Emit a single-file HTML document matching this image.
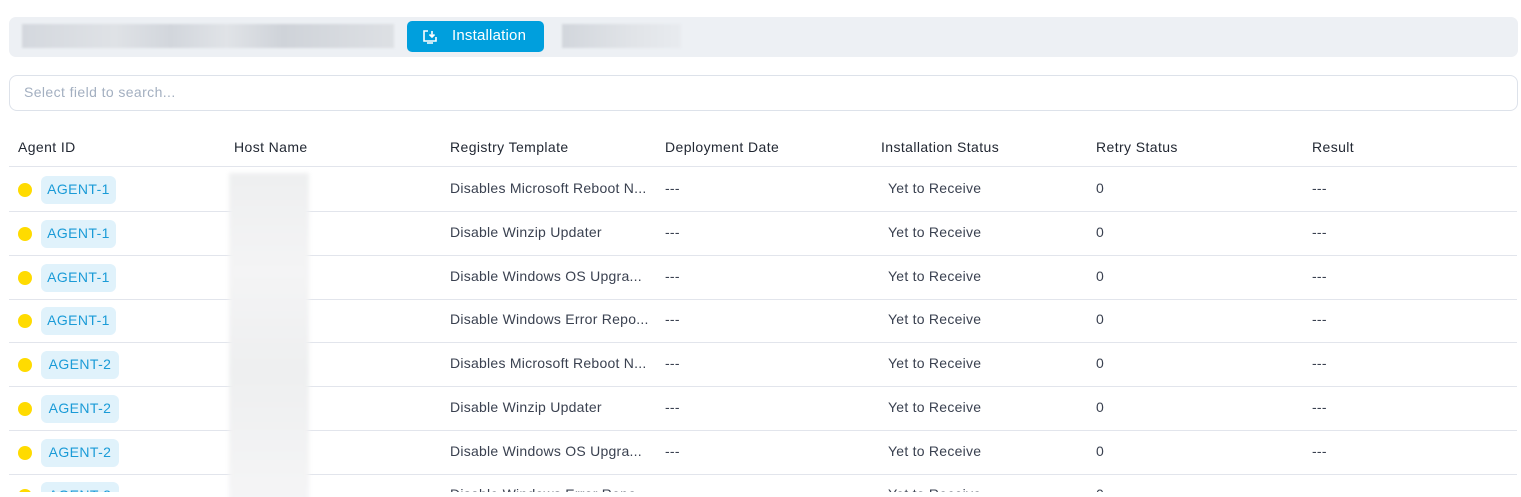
<!DOCTYPE html>
<html><head><style>
*{box-sizing:border-box;margin:0;padding:0}
html,body{width:1521px;height:497px;overflow:hidden}
body{background:#fff;font-family:"Liberation Sans",sans-serif;color:#3a4150;position:relative}
.bar{position:absolute;left:9px;top:17px;width:1509px;height:40px;background:#edf0f4;border-radius:7px}
.blur1{position:absolute;left:22px;top:24px;width:372px;height:24px;background:linear-gradient(90deg,#d4d8de,#dfe2e6 25%,#d2d6dc 40%,#e0e3e7 55%,#cfd3d9 70%,#dde0e4 100%);filter:blur(1px)}
.blur2{position:absolute;left:562px;top:24px;width:119px;height:24px;background:linear-gradient(90deg,#d2d6dc,#e1e4e8 60%,#e8ebef);filter:blur(1px)}
.btn{position:absolute;left:407px;top:21px;width:137px;height:31px;background:#009fdd;border-radius:5px;color:#fff;font-size:15px;line-height:30px;letter-spacing:0.2px}
.btn span{position:absolute;left:45px;top:0}
.btn svg{position:absolute;left:15px;top:8px}
.search{position:absolute;left:9px;top:75px;width:1509px;height:36px;border:1px solid #dde2ea;border-radius:8px;font-size:14px;letter-spacing:0.4px;color:#a3afc0;line-height:33px;padding-left:14px}
.hdr,.row{position:absolute;left:9px;width:1508px}
.hdr{top:135px;height:32px;font-size:14px;letter-spacing:0.4px;color:#222833;border-bottom:1px solid #e2e5ec}
.cell{position:absolute;white-space:nowrap}
.row{height:44px;border-bottom:1px solid #e2e5ec;font-size:14px;letter-spacing:0.25px}
.dot{position:absolute;left:9px;width:14px;height:14px;border-radius:50%;background:#ffdb00;top:15px}
.tag{position:absolute;left:32px;top:8px;height:28px;line-height:27px;width:75px;text-align:center;background:#e0f2fb;color:#1a9bd7;border-radius:6px;font-size:14px;letter-spacing:0.4px}
.tag.w{width:78px}
.hb{position:absolute;left:229px;top:173px;width:80px;height:330px;background:linear-gradient(180deg,#eeeff0,#f4f4f5 30%,#eeeff0 60%,#f5f5f6);filter:blur(2px)}
</style></head><body>
<div class="bar"></div><div class="blur1"></div><div class="blur2"></div>
<div class="btn"><svg width="16" height="16" viewBox="0 0 16 16" fill="none" stroke="#fff" stroke-width="1.6"><path d="M6 2H2v10h12V8M5 14h6M10 2v6M7.5 5.5L10 8l2.5-2.5"/></svg><span>Installation</span></div>
<div class="search">Select field to search...</div>
<div class="hdr">
<div class="cell" style="left:9px;top:4px">Agent ID</div>
<div class="cell" style="left:225px;top:4px">Host Name</div>
<div class="cell" style="left:441px;top:4px">Registry Template</div>
<div class="cell" style="left:656px;top:4px">Deployment Date</div>
<div class="cell" style="left:872px;top:4px">Installation Status</div>
<div class="cell" style="left:1087px;top:4px">Retry Status</div>
<div class="cell" style="left:1303px;top:4px">Result</div>
</div>
<div style="position:absolute;left:0;top:0;width:1521px;height:492px;overflow:hidden">
<div class="row" style="top:168px"><div class="dot"></div><div class="tag">AGENT-1</div><div class="cell" style="left:441px;top:12px">Disables Microsoft Reboot N...</div><div class="cell" style="left:656px;top:12px">---</div><div class="cell" style="left:879px;top:12px">Yet to Receive</div><div class="cell" style="left:1087px;top:12px">0</div><div class="cell" style="left:1303px;top:12px">---</div></div>
<div class="row" style="top:212px"><div class="dot"></div><div class="tag">AGENT-1</div><div class="cell" style="left:441px;top:12px">Disable Winzip Updater</div><div class="cell" style="left:656px;top:12px">---</div><div class="cell" style="left:879px;top:12px">Yet to Receive</div><div class="cell" style="left:1087px;top:12px">0</div><div class="cell" style="left:1303px;top:12px">---</div></div>
<div class="row" style="top:256px"><div class="dot"></div><div class="tag">AGENT-1</div><div class="cell" style="left:441px;top:12px">Disable Windows OS Upgra...</div><div class="cell" style="left:656px;top:12px">---</div><div class="cell" style="left:879px;top:12px">Yet to Receive</div><div class="cell" style="left:1087px;top:12px">0</div><div class="cell" style="left:1303px;top:12px">---</div></div>
<div class="row" style="top:299px"><div class="dot"></div><div class="tag">AGENT-1</div><div class="cell" style="left:441px;top:12px">Disable Windows Error Repo...</div><div class="cell" style="left:656px;top:12px">---</div><div class="cell" style="left:879px;top:12px">Yet to Receive</div><div class="cell" style="left:1087px;top:12px">0</div><div class="cell" style="left:1303px;top:12px">---</div></div>
<div class="row" style="top:343px"><div class="dot"></div><div class="tag w">AGENT-2</div><div class="cell" style="left:441px;top:12px">Disables Microsoft Reboot N...</div><div class="cell" style="left:656px;top:12px">---</div><div class="cell" style="left:879px;top:12px">Yet to Receive</div><div class="cell" style="left:1087px;top:12px">0</div><div class="cell" style="left:1303px;top:12px">---</div></div>
<div class="row" style="top:387px"><div class="dot"></div><div class="tag w">AGENT-2</div><div class="cell" style="left:441px;top:12px">Disable Winzip Updater</div><div class="cell" style="left:656px;top:12px">---</div><div class="cell" style="left:879px;top:12px">Yet to Receive</div><div class="cell" style="left:1087px;top:12px">0</div><div class="cell" style="left:1303px;top:12px">---</div></div>
<div class="row" style="top:431px"><div class="dot"></div><div class="tag w">AGENT-2</div><div class="cell" style="left:441px;top:12px">Disable Windows OS Upgra...</div><div class="cell" style="left:656px;top:12px">---</div><div class="cell" style="left:879px;top:12px">Yet to Receive</div><div class="cell" style="left:1087px;top:12px">0</div><div class="cell" style="left:1303px;top:12px">---</div></div>
<div class="row" style="top:474px"><div class="dot"></div><div class="tag w">AGENT-2</div><div class="cell" style="left:441px;top:12px">Disable Windows Error Repo...</div><div class="cell" style="left:656px;top:12px">---</div><div class="cell" style="left:879px;top:12px">Yet to Receive</div><div class="cell" style="left:1087px;top:12px">0</div><div class="cell" style="left:1303px;top:12px">---</div></div>
</div>
<div class="hb"></div>
</body></html>
